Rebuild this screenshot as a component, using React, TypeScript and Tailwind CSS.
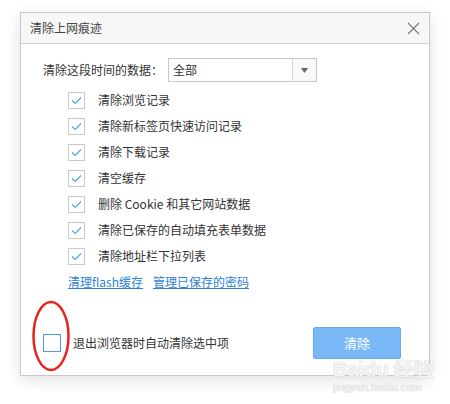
import React from 'react'

const font = { fontFamily: '"Noto Sans CJK SC", "Noto Sans", sans-serif' }

const items = [
  '清除浏览记录',
  '清除新标签页快速访问记录',
  '清除下载记录',
  '清空缓存',
  '删除 Cookie 和其它网站数据',
  '清除已保存的自动填充表单数据',
  '清除地址栏下拉列表',
]

const CheckBox: React.FC = () => (
  <span className="w-[17px] h-[17px] border border-[#c9c9c9] bg-white flex items-center justify-center">
    <svg width="13" height="13" viewBox="0 0 13 13">
      <polyline points="2,6.5 5.2,9.5 11,3.5" fill="none" stroke="#4fa3f2" strokeWidth="1.2" />
    </svg>
  </span>
)

const App: React.FC = () => {
  return (
    <div className="relative w-[450px] h-[404px] bg-white text-[12px] text-[#333]" style={font}>
      <div className="absolute left-[20px] top-[12px] w-[410px] h-[364px] border border-[#c8c8c8] bg-white shadow-[0_4px_14px_rgba(0,0,0,0.12)] flex flex-col">
        {/* header */}
        <div className="h-[31px] bg-[#f7f7f7] border-b border-[#d0d0d0] flex items-center justify-between pl-[9px] pr-[9px]">
          <span className="text-[12px] text-[#444]">清除上网痕迹</span>
          <svg width="13" height="13" viewBox="0 0 13 13">
            <path d="M1 1 L12 12 M12 1 L1 12" stroke="#777" strokeWidth="1.1" />
          </svg>
        </div>

        {/* body */}
        <div className="flex flex-col pl-[22px] pt-[14px]">
          <div className="flex items-center h-[24px]">
            <span className="w-[125px]">清除这段时间的数据：</span>
            <div className="w-[149px] h-[24px] border border-[#c6c6c6] flex">
              <span className="flex-1 flex items-center pl-[4px]">全部</span>
              <span className="w-[24px] border-l border-[#d6d6d6] bg-[#f9f9f9] flex items-center justify-center">
                <svg width="7" height="5" viewBox="0 0 7 5">
                  <polygon points="0,0 7,0 3.5,5" fill="#666" />
                </svg>
              </span>
            </div>
          </div>

          <div className="flex flex-col mt-[5px] pl-[25px]">
            {items.map((t) => (
              <div key={t} className="h-[26px] flex items-center gap-[13px]">
                <CheckBox />
                <span>{t}</span>
              </div>
            ))}
            <div className="h-[26px] flex items-center gap-[10px] text-[#2d7fd8]">
              <span className="underline">清理flash缓存</span>
              <span className="underline">管理已保存的密码</span>
            </div>
          </div>
        </div>

        {/* footer */}
        <div className="mt-[32px] flex items-center justify-between pl-[22px] pr-[28px]">
          <div className="flex items-center gap-[12px]">
            <span className="w-[18px] h-[18px] border border-[#4a9ff0] bg-white" />
            <span>退出浏览器时自动清除选中项</span>
          </div>
          <button className="w-[88px] h-[32px] rounded-[2px] bg-[#7ab8f7] border border-[#6aa9ec] text-white text-[13px]">
            清除
          </button>
        </div>
      </div>

      {/* red annotation */}
      <svg className="absolute left-[31px] top-[300px]" width="42" height="72" viewBox="0 0 42 72">
        <ellipse cx="20" cy="36" rx="17.5" ry="34" fill="none" stroke="#e8221d" strokeWidth="2.5" />
      </svg>

      {/* watermark */}
      <div
        className="absolute left-[333px] top-[359px] flex flex-col items-start leading-none text-white/80 [text-shadow:0_0_1px_#c8c8c8,0_0_1px_#c8c8c8]"
        style={{ fontFamily: '"Liberation Sans", sans-serif' }}
      >
        <span className="text-[20px] font-bold">Baidu 经验</span>
        <span className="text-[11px] mt-[3px]">jingyan.baidu.com</span>
      </div>
    </div>
  )
}

export default App
